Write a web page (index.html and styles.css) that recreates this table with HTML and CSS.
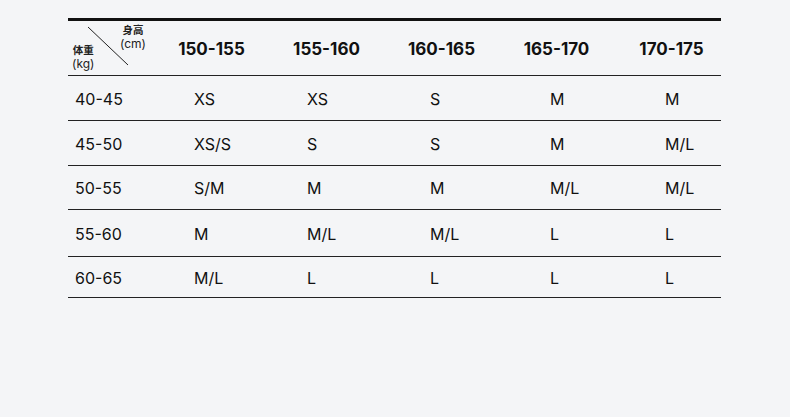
FILE: index.html
```html
<!DOCTYPE html>
<html lang="zh">
<head>
<meta charset="utf-8">
<link rel="stylesheet" href="styles.css">
</head>
<body>
<div class="chart">
  <div class="row head">
    <div class="corner">
      <svg class="diag" width="86" height="54" viewBox="0 0 86 54"><line x1="20" y1="6" x2="60" y2="44" stroke="#222" stroke-width="1"/></svg>
      <div class="lab top"><span class="cjk">身高</span><span class="unit">(cm)</span></div>
      <div class="lab bot"><span class="cjk">体重</span><span class="unit">(kg)</span></div>
    </div>
    <div class="hc">150-155</div>
    <div class="hc">155-160</div>
    <div class="hc">160-165</div>
    <div class="hc">165-170</div>
    <div class="hc last">170-175</div>
  </div>
  <div class="row r1">
    <div class="c c0">40-45</div><div class="c c1">XS</div><div class="c c2">XS</div><div class="c c3">S</div><div class="c c4">M</div><div class="c c5">M</div>
  </div>
  <div class="row r2">
    <div class="c c0">45-50</div><div class="c c1">XS/S</div><div class="c c2">S</div><div class="c c3">S</div><div class="c c4">M</div><div class="c c5">M/L</div>
  </div>
  <div class="row r3">
    <div class="c c0">50-55</div><div class="c c1">S/M</div><div class="c c2">M</div><div class="c c3">M</div><div class="c c4">M/L</div><div class="c c5">M/L</div>
  </div>
  <div class="row r4">
    <div class="c c0">55-60</div><div class="c c1">M</div><div class="c c2">M/L</div><div class="c c3">M/L</div><div class="c c4">L</div><div class="c c5">L</div>
  </div>
  <div class="row r5">
    <div class="c c0">60-65</div><div class="c c1">M/L</div><div class="c c2">L</div><div class="c c3">L</div><div class="c c4">L</div><div class="c c5">L</div>
  </div>
</div>
</body>
</html>
```
FILE: styles.css
```css
html, body {
  margin: 0;
  padding: 0;
  background: #f4f5f7;
}
body {
  padding: 18px 0 0 68px;
  font-family: Inter, "Noto Sans CJK SC", sans-serif;
  color: #111;
}
.chart {
  width: 653px;
  border-top: 3px solid #111;
}
.row {
  display: grid;
  grid-template-columns: 86px 115px 115px 115px 115px 107px;
  align-items: center;
  border-bottom: 1px solid #222;
}
.head { height: 54px; }
.r1 { height: 44px; }
.r2 { height: 44px; }
.r3 { height: 43px; }
.r4 { height: 46px; }
.r5 { height: 40px; }
.corner {
  position: relative;
  height: 54px;
}
.diag {
  position: absolute;
  left: 0;
  top: 0;
}
.lab {
  position: absolute;
  display: flex;
  flex-direction: column;
  align-items: center;
  gap: 2px;
  color: #222;
}
.lab .cjk {
  font-size: 10.5px;
  line-height: 11px;
  font-weight: 700;
}
.lab .unit {
  font-size: 12px;
  line-height: 12px;
}
.top { left: 52px; top: 4px; }
.bot { left: 4px; top: 24px; }
.hc {
  text-align: center;
  font-weight: 700;
  font-size: 17px;
  padding-top: 1px;
}
.hc.last { padding-left: 8px; }
.c {
  font-size: 16px;
  padding-top: 1px;
}
.c0 { padding-left: 7px; }
.c1 { padding-left: 40px; }
.c2 { padding-left: 38px; }
.c3 { padding-left: 46px; }
.c4 { padding-left: 51px; }
.c5 { padding-left: 51px; }
```
